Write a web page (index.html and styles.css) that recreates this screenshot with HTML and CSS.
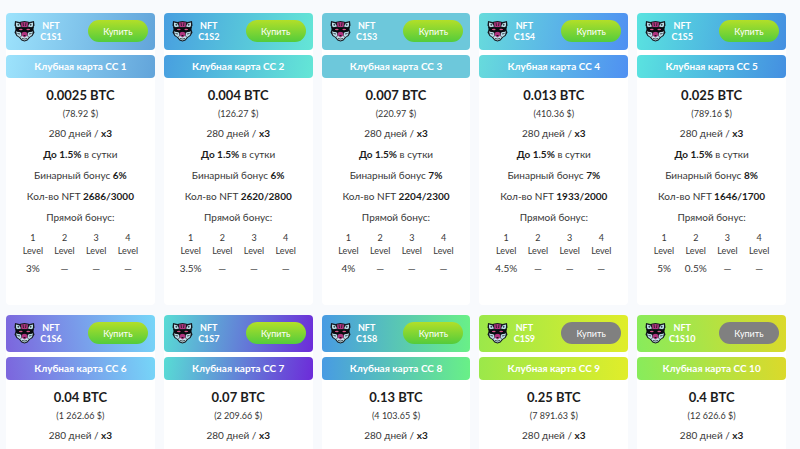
FILE: index.html
```html
<!DOCTYPE html>
<html lang="ru">
<head>
    <meta charset="UTF-8">
    <meta name="viewport" content="width=device-width, initial-scale=1.0">
    <title>Клубные карты</title>
    <link rel="stylesheet" href="styles.css">
</head>
<body>

    <svg class="sprite" aria-hidden="true">
        <symbol id="panther" viewBox="0 0 44 44">
            <path d="M3 2 L12 4 L16 3 L22 2 L28 3 L32 4 L41 2 L42 11 L39 16 L42 25 L38 32 L33 35 L28 41 L22 43 L16 41 L11 35 L6 32 L2 25 L5 16 L2 11 Z" fill="#14181f"/>
            <path d="M5 5 L12 7 L15 13 L7 15 L5 11 Z M39 5 L32 7 L29 13 L37 15 L39 11 Z" fill="#b9dbe6"/>
            <path d="M8 8 L12 9 L9 12 Z M36 8 L32 9 L35 12 Z" fill="#14181f"/>
            <path d="M5 22 L15 25 L16 32 L12 34 L7 30 Z M39 22 L29 25 L28 32 L32 34 L37 30 Z" fill="#b9dbe6"/>
            <path d="M13 34 L19 31 L22 34 L25 31 L31 34 L27 39 L22 41 L17 39 Z" fill="#c5e2ea"/>
            <path d="M15 5 L22 4 L29 5 L28 14 L16 14 Z M17 24 L27 24 L28 31 L22 35 L16 31 Z" fill="#b0357f"/>
            <path d="M19 5 L20 12 M25 5 L24 12 M8 27 L13 28 M36 27 L31 28 M17 37 L22 38 L27 37" fill="none" stroke="#14181f" stroke-width="1.5"/>
            <path d="M3 14 L22 16 L41 14 L38 23 L26 25 L22 22 L18 25 L6 23 Z" fill="#090b10"/>
            <path d="M11 19 H18 M26 19 H33" stroke="#ce3c79" stroke-width="2"/>
            <path d="M15 17 V21 M29 17 V21" stroke="#e8b7c6" stroke-width="1"/>
            <path d="M19 30 H25 L22 33 Z" fill="#14181f"/>
        </symbol>
    </svg>

    <main class="cards" id="cards">
        <!-- Карты добавляет script.js -->
    </main>

    <script src="script.js"></script>

</body>
</html>
```
FILE: styles.css
```css
body {
    margin: 0;
    background-color: #f8fafd;
    color: #383838;
    font-family: 'Lato', 'Noto Sans', sans-serif;
    font-size: 10px;
}

body::-webkit-scrollbar {
    display: none;
}

.sprite {
    display: none;
}

.cards {
    display: grid;
    grid-template-columns: repeat(5, 1fr);
    gap: 10px 9px;
    padding: 13px 14px 13px 6px;
}

.card {
    background-color: #ffffff;
    border-radius: 4px;
    padding-bottom: 25px;
}

.card-header {
    display: flex;
    align-items: center;
    padding: 7px 7px 8px;
    border-radius: 4px;
    margin-bottom: 5px;
}

.card-logo {
    width: 23px;
    height: 22px;
}

.card-code {
    width: 30px;
    color: #ffffff;
    font-size: 9px;
    font-weight: 700;
    line-height: 11px;
    text-align: center;
}

.buy-button {
    width: 60px;
    height: 22px;
    margin-left: auto;
    padding: 0;
    border: none;
    border-radius: 11px;
    background: linear-gradient(to bottom, #b2df28, #53cc3c);
    color: #ffffff;
    font-family: inherit;
    font-size: 9px;
    cursor: pointer;
}

.buy-button:disabled {
    background: #808080;
    cursor: default;
}

.card-title {
    margin: 0;
    border-radius: 4px;
    color: #ffffff;
    font-size: 10px;
    font-weight: 700;
    line-height: 23px;
    text-align: center;
}

.card-body {
    padding: 7px 11px 0;
    text-align: center;
}

.card-body p {
    margin: 0;
    line-height: 21px;
    white-space: nowrap;
}

.card-body b {
    color: #1c1c1c;
}

.card-body .price {
    color: #1c1c1c;
    font-size: 13px;
    font-weight: 700;
    line-height: 20px;
}

.card-body .price-usd {
    font-size: 9px;
    line-height: 18px;
}

.levels {
    width: 100%;
    table-layout: fixed;
    border-collapse: collapse;
    margin-top: 3px;
}

.levels th,
.levels td {
    padding: 0;
}

.levels th {
    font-size: 9px;
    font-weight: 400;
    line-height: 13px;
}

.levels td {
    line-height: 23px;
}

.theme-1 { background: linear-gradient(100deg, #9de3fc, #62a4da); }
.theme-2 { background: linear-gradient(100deg, #489fe0, #64e6d6); }
.theme-3 { background: #6dc8db; }
.theme-4 { background: linear-gradient(100deg, #67dbdc, #4f90f2); }
.theme-5 { background: linear-gradient(100deg, #5ae3e0, #448fe1); }
.theme-6 { background: linear-gradient(80deg, #7c65dd, #76d6f8); }
.theme-7 { background: linear-gradient(100deg, #58dcd5, #6d2bd9); }
.theme-8 { background: linear-gradient(90deg, #489be3, #69f087); }
.theme-9 { background: linear-gradient(90deg, #9be84a, #e0ed2a); }
.theme-10 { background: linear-gradient(80deg, #87ec5c, #dcd92a); }
```
FILE: script.js
```js
const cards = [
    { btc: '0.0025', usd: '78.92', binary: 6, nft: '2686/3000', levels: ['3%', '—', '—', '—'], active: true },
    { btc: '0.004', usd: '126.27', binary: 6, nft: '2620/2800', levels: ['3.5%', '—', '—', '—'], active: true },
    { btc: '0.007', usd: '220.97', binary: 7, nft: '2204/2300', levels: ['4%', '—', '—', '—'], active: true },
    { btc: '0.013', usd: '410.36', binary: 7, nft: '1933/2000', levels: ['4.5%', '—', '—', '—'], active: true },
    { btc: '0.025', usd: '789.16', binary: 8, nft: '1646/1700', levels: ['5%', '0.5%', '—', '—'], active: true },
    { btc: '0.04', usd: '1 262.66', active: true },
    { btc: '0.07', usd: '2 209.66', active: true },
    { btc: '0.13', usd: '4 103.65', active: true },
    { btc: '0.25', usd: '7 891.63', active: false },
    { btc: '0.4', usd: '12 626.6', active: false }
];

function renderDetails(card) {
    if (!card.levels) {
        return '';
    }

    return `
        <p><b>До 1.5%</b> в сутки</p>
        <p>Бинарный бонус <b>${card.binary}%</b></p>
        <p>Кол-во NFT <b>${card.nft}</b></p>
        <p>Прямой бонус:</p>
        <table class="levels">
            <thead>
                <tr>${card.levels.map((value, i) => `<th scope="col">${i + 1}<br>Level</th>`).join('')}</tr>
            </thead>
            <tbody>
                <tr>${card.levels.map(value => `<td>${value}</td>`).join('')}</tr>
            </tbody>
        </table>`;
}

document.getElementById('cards').innerHTML = cards.map((card, index) => {
    const number = index + 1;
    return `
    <article class="card">
        <div class="card-header theme-${number}">
            <svg class="card-logo" aria-hidden="true"><use href="#panther"></use></svg>
            <div class="card-code">NFT<br>C1S${number}</div>
            <button type="button" class="buy-button" ${card.active ? '' : 'disabled'}>Купить</button>
        </div>
        <h2 class="card-title theme-${number}">Клубная карта CC ${number}</h2>
        <div class="card-body">
            <p class="price">${card.btc} BTC</p>
            <p class="price-usd">(${card.usd} $)</p>
            <p>280 дней / <b>x3</b></p>
            ${renderDetails(card)}
        </div>
    </article>`;
}).join('');
```
